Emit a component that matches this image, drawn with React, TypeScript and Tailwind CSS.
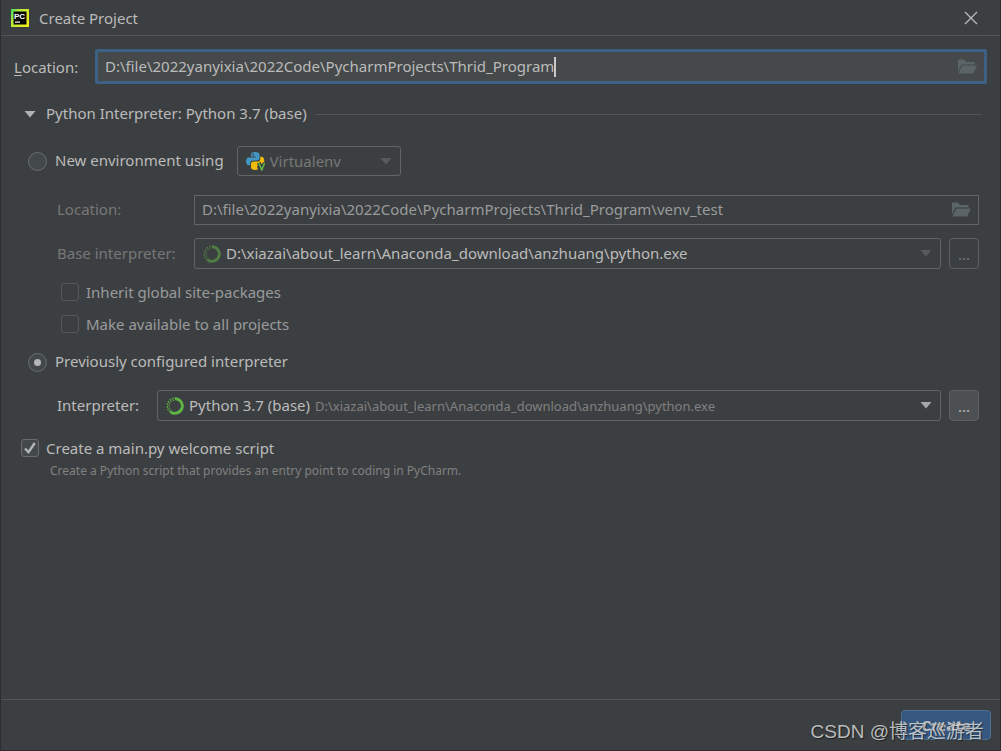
import React, { useState } from 'react';
import { clsx } from 'clsx';

const FolderIcon = () => (
  <svg width="20" height="16" viewBox="0 0 20 16" fill="#5b6467" aria-hidden="true">
    <path d="M1 0.5h6l2 2.5h8.5v2.5H4.5L1 12.5z" />
    <path d="M5.2 6.5H20L16.2 14.5H1.4z" />
  </svg>
);

const SpinnerIcon = ({ dim = false }: { dim?: boolean }) => (
  <svg width="18" height="18" viewBox="0 0 18 18" fill="none" stroke={dim ? '#4f7d43' : '#5fb544'} aria-hidden="true">
    <path d="M9 1.7A7.3 7.3 0 1 1 4.6 14.8" strokeWidth="2.9" />
    <path d="M4.2 15A7.7 7.7 0 0 1 9 1.3" strokeWidth="1.5" strokeDasharray="1.5 1.1" />
    <path d="M5.4 13.6A5.9 5.9 0 0 1 9 3.1" strokeWidth="1.2" strokeDasharray="1.1 1.3" />
  </svg>
);

const PythonEnvIcon = () => (
  <svg width="19" height="19" viewBox="0 0 19 19" aria-hidden="true">
    <path
      fill="#4496c4"
      d="M8.9 0C6.3 0 5 1 5 2.8V4.6h4.6v.8H3C1 5.4 0 7 0 9.3s1 4 2.8 4H4.2V11c0-1.6 1.2-2.6 2.7-2.6h4.3c1.4 0 2.3-1 2.3-2.3V2.8C13.5 1 12 0 8.900 0z"
    />
    <circle cx="7" cy="2.4" r="0.9" fill="#3c3f41" />
    <path
      fill="#f2bd09"
      d="M14.3 4.8v2.1c0 1.6-1.2 2.6-2.6 2.6H7.5C6 9.5 5 10.5 5 11.9v3.4c0 1.7 1.6 2.7 4.2 2.7 1.1 0 2-.1 2.7-.4L11 14h3l1-2h3c.2-.7.3-1.5.3-2.5 0-2.9-1-4.7-2.6-4.7z"
    />
    <path fill="none" stroke="#3c3f41" strokeWidth="4" d="M12.8 10.8l3 7 3-7" />
    <path fill="none" stroke="#5fb544" strokeWidth="1.6" d="M12.9 11l2.8 7 2.8-7" />
  </svg>
);

const PyCharmLogo = () => (
  <svg width="18" height="18" viewBox="0 0 18 18" aria-hidden="true">
    <defs>
      <linearGradient id="logo" x1="0" y1="0" x2="1" y2="0.6">
        <stop offset="0" stopColor="#3ddc6a" />
        <stop offset="0.35" stopColor="#b4ea3a" />
        <stop offset="1" stopColor="#eeee1c" />
      </linearGradient>
    </defs>
    <rect width="18" height="18" fill="url(#logo)" />
    <rect x="2.5" y="2.5" width="13" height="13" fill="#050805" />
    <text x="3" y="9.5" fontFamily="Liberation Sans, sans-serif" fontWeight="700" fontSize="8" fill="#fff">
      PC
    </text>
    <rect x="4" y="12.5" width="5" height="1.2" fill="#fff" />
  </svg>
);

const Arrow = ({ className }: { className?: string }) => (
  <svg width="12" height="7" viewBox="0 0 12 7" className={clsx('shrink-0 fill-current', className)} aria-hidden="true">
    <path d="M0.5 0h11L6 6.5z" />
  </svg>
);

interface TickProps {
  id: string;
  label: string;
  checked: boolean;
  disabled?: boolean;
  onChange: (checked: boolean) => void;
}

const Tick: React.FC<TickProps> = ({ id, label, checked, disabled, onChange }) => (
  <div className="flex h-6 items-center gap-[7px]">
    <span className="grid size-[18px] place-items-center">
      <input
        id={id}
        type="checkbox"
        checked={checked}
        disabled={disabled}
        onChange={(e) => onChange(e.target.checked)}
        className="col-start-1 row-start-1 size-[18px] appearance-none rounded-[3px] border border-[#6b6b6b] bg-[#43494a] disabled:border-[#55585a] disabled:bg-transparent"
      />
      {checked && (
        <svg width="14" height="14" viewBox="0 0 14 14" className="pointer-events-none col-start-1 row-start-1" aria-hidden="true">
          <path d="M2 7.5l3.5 3.7L11.8 2" fill="none" stroke="#b4b6b7" strokeWidth="2.4" />
        </svg>
      )}
    </span>
    <label htmlFor={id} className={disabled ? 'text-[#999b9c]' : undefined}>{label}</label>
  </div>
);

interface ModeRadioProps {
  id: string;
  label: string;
  checked: boolean;
  onChange: () => void;
}

const ModeRadio: React.FC<ModeRadioProps> = ({ id, label, checked, onChange }) => (
  <div className="flex items-center gap-2">
    <span className="grid size-[19px] place-items-center">
      <input
        id={id}
        type="radio"
        name="mode"
        checked={checked}
        onChange={onChange}
        className="col-start-1 row-start-1 size-[19px] appearance-none rounded-full border border-[#6b6e70] bg-[#43494a]"
      />
      {checked && <span className="pointer-events-none col-start-1 row-start-1 size-[7px] rounded-full bg-[#b4b6b7]" />}
    </span>
    <label htmlFor={id} className="pb-0.5">{label}</label>
  </div>
);

const App: React.FC = () => {
  const [location, setLocation] = useState('D:\\file\\2022yanyixia\\2022Code\\PycharmProjects\\Thrid_Program');
  const [mode, setMode] = useState<'new' | 'existing'>('existing');
  const [inherit, setInherit] = useState(false);
  const [shared, setShared] = useState(false);
  const [welcome, setWelcome] = useState(true);

  const isNew = mode === 'new';

  return (
    <div className="relative flex min-h-screen flex-col border-x border-b border-[#2b2d2e] bg-[#3c3f41] font-['Noto_Sans','Noto_Sans_CJK_SC',sans-serif] text-[15px] leading-5 text-[#bbbbbb]">
      <header className="flex h-9 items-center gap-2.5 border-b border-[#515455] pr-[18px] pl-2.5">
        <PyCharmLogo />
        <h1 className="flex-1">Create Project</h1>
        <button type="button" aria-label="Close" className="p-1">
          <svg width="14" height="14" viewBox="0 0 14 14" stroke="#b8babb" strokeWidth="1.3" aria-hidden="true">
            <path d="M1 1l12 12M13 1L1 13" />
          </svg>
        </button>
      </header>

      <main className="flex-1 pt-[13px]">
        <div className="flex items-center pr-[13px] pl-[13px]">
          <label htmlFor="location" className="w-[81px] shrink-0"><u className="underline-offset-2">L</u>ocation:</label>
          <div className="flex h-[35px] min-w-0 flex-1 items-center rounded-[2px] border-3 border-[#3d6185] bg-[#45494a] px-[7px]">
            <input
              id="location"
              value={location}
              onChange={(e) => setLocation(e.target.value)}
              className="field-sizing-content min-w-0 pb-0.5 outline-none"
            />
            <span className="h-5 w-0.5 shrink-0 bg-[#c8c8c8]" />
            <button type="button" aria-label="Browse location" className="ml-auto"><FolderIcon /></button>
          </div>
        </div>

        <div className="mt-[18px] flex h-6 items-center pr-[18px] pl-[23px]">
          <button type="button" className="flex shrink-0 items-center gap-2.5">
            <Arrow className="text-[#afb1b3]" />
            <span className="pb-0.5">Python Interpreter: Python 3.7 (base)</span>
          </button>
          <div className="ml-2 h-px flex-1 bg-[#515455]" />
        </div>

        <div className="pr-[21px] pl-[27px]">
          <div className="mt-5 flex h-[30px] items-center gap-[13px]">
            <ModeRadio id="mode-new" label="New environment using" checked={isNew} onChange={() => setMode('new')} />
            <div className="flex h-[30px] w-[164px] items-center gap-[5px] rounded-[3px] border border-[#646464] px-2 text-[#777777]">
              <PythonEnvIcon />
              <select aria-label="Environment type" disabled={!isNew} className="min-w-0 flex-1 appearance-none opacity-100 outline-none">
                <option>Virtualenv</option>
              </select>
              <Arrow className="text-[#5a5a5a]" />
            </div>
          </div>

          <div className="pl-[29px]">
            <div className="mt-[19px] flex items-center">
              <label htmlFor="venv" className="w-[137px] shrink-0 pb-0.5 text-[#777777]">Location:</label>
              <div className="flex h-[30px] min-w-0 flex-1 items-center border border-[#646464] px-[7px]">
                <input
                  id="venv"
                  disabled={!isNew}
                  defaultValue={'D:\\file\\2022yanyixia\\2022Code\\PycharmProjects\\Thrid_Program\\venv_test'}
                  className="min-w-0 flex-1 pb-0.5 text-[#999b9c]"
                />
                <button type="button" aria-label="Browse environment location" disabled={!isNew}><FolderIcon /></button>
              </div>
            </div>

            <div className="mt-[13px] flex items-center">
              <label htmlFor="base" className="w-[137px] shrink-0 pb-0.5 text-[#777777]">Base interpreter:</label>
              <div className="flex h-[31px] min-w-0 flex-1 items-center gap-[5px] rounded-[3px] border border-[#646464] px-2">
                <SpinnerIcon dim />
                <select id="base" disabled={!isNew} className="min-w-0 flex-1 appearance-none pb-0.5 opacity-100 outline-none">
                  <option>D:\xiazai\about_learn\Anaconda_download\anzhuang\python.exe</option>
                </select>
                <Arrow className="text-[#5a5a5a]" />
              </div>
              <button type="button" disabled={!isNew} className="ml-2 h-[31px] w-[30px] rounded-[4px] border border-[#5e6060] text-[#777777]">...</button>
            </div>
          </div>

          <div className="pl-[33px]">
            <div className="mt-[11px]">
              <Tick id="inherit" label="Inherit global site-packages" checked={inherit} disabled={!isNew} onChange={setInherit} />
            </div>
            <div className="mt-2">
              <Tick id="shared" label="Make available to all projects" checked={shared} disabled={!isNew} onChange={setShared} />
            </div>
          </div>

          <div className="mt-3.5 flex h-6 items-center">
            <ModeRadio id="mode-existing" label="Previously configured interpreter" checked={!isNew} onChange={() => setMode('existing')} />
          </div>

          <div className="mt-4 flex items-center pl-[29px]">
            <label htmlFor="interpreter" className="w-[100px] shrink-0 pb-0.5">Interpreter:</label>
            <div className="flex h-[31px] min-w-0 flex-1 items-center gap-[5px] rounded-[3px] border border-[#646464] px-2">
              <SpinnerIcon />
              <select id="interpreter" disabled={isNew} className="field-sizing-content shrink-0 appearance-none pb-0.5 opacity-100 outline-none">
                <option>Python 3.7 (base)</option>
              </select>
              <span className="min-w-0 flex-1 truncate text-[13px] text-[#808080]">D:\xiazai\about_learn\Anaconda_download\anzhuang\python.exe</span>
              <Arrow className="text-[#a5a8aa]" />
            </div>
            <button type="button" disabled={isNew} className="ml-2 h-[31px] w-[30px] rounded-[4px] border border-[#5e6060] bg-[#4c5052]">...</button>
          </div>
        </div>

        <div className="mt-[15px] pl-5">
          <Tick id="welcome" label="Create a main.py welcome script" checked={welcome} onChange={setWelcome} />
          <p className="mt-px pl-[29px] text-xs leading-5 text-[#808080]">
            Create a Python script that provides an entry point to coding in PyCharm.
          </p>
        </div>
      </main>

      <footer className="flex justify-end border-t border-[#515455] px-[9px] py-2.5">
        <button type="submit" className="h-[30px] w-[90px] rounded-[4px] border border-[#4c708c] bg-[#365880] font-bold">Create</button>
      </footer>

      <div className="pointer-events-none absolute right-4 bottom-1.5 font-['Liberation_Sans','Noto_Sans_CJK_SC',sans-serif] text-[19px] leading-6 text-[#d4d6d7]/85 text-shadow-[1px_1px_1px_rgb(0_0_0/0.5)]">
        CSDN @博客巡游者
      </div>
    </div>
  );
};

export default App;
